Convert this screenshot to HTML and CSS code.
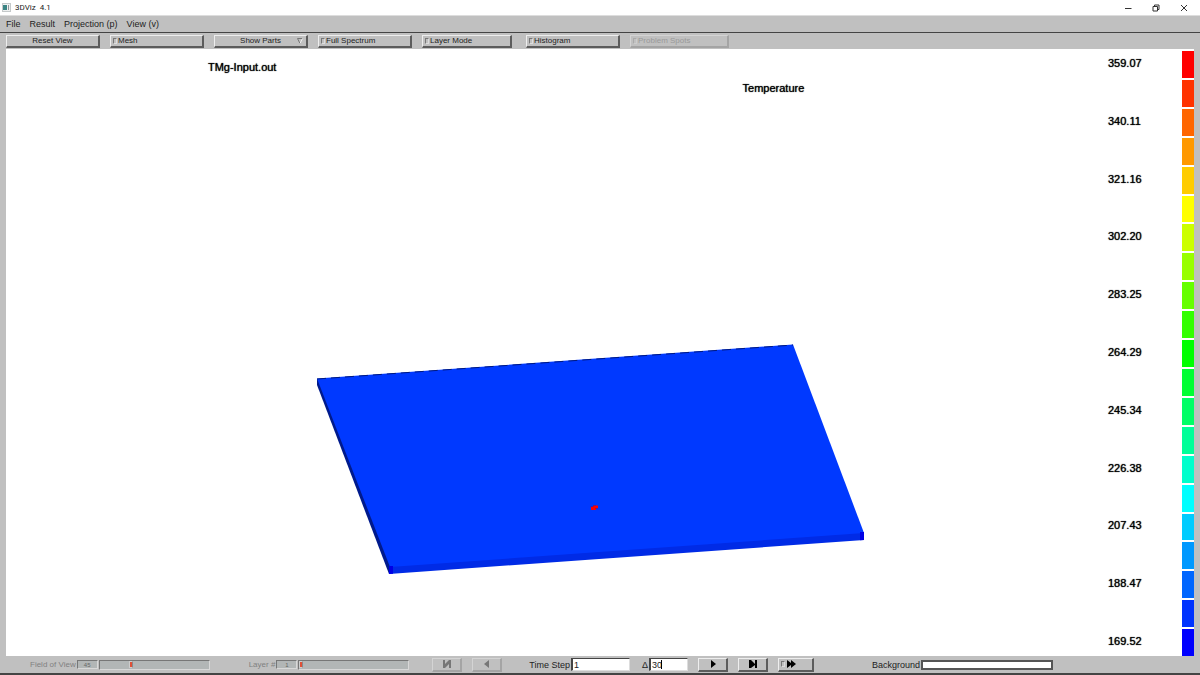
FILE: index.html
```html
<!DOCTYPE html>
<html lang="en">
<head>
<meta charset="utf-8">
<title>3DViz 4.1</title>
<link rel="stylesheet" href="styles.css">
</head>
<body>
<header class="titlebar">
  <svg class="app-icon" viewBox="0 0 9 9" aria-hidden="true"><rect x=".5" y=".5" width="8" height="8" fill="#eef0f0" stroke="#c5c9ca"/><rect x="1" y="2" width="4" height="5" fill="#3b8484"/><path d="M6.500 2v5" stroke="#8f9698"/></svg>
  <span class="app-name">3DViz&nbsp; 4.1</span>
  <div class="window-controls">
    <button aria-label="Minimize"><svg viewBox="0 0 8 8"><path d="M1 4.500h6.500"/></svg></button>
    <button aria-label="Restore"><svg viewBox="0 0 8 8"><path d="M1 2.500h4.500v4.500h-4.500zM2.500 2.500v-1.500h4.500v4.500h-1.500"/></svg></button>
    <button aria-label="Close"><svg viewBox="0 0 8 8"><path d="M1 1l6 6M7 1l-6 6"/></svg></button>
  </div>
</header>
<nav class="menubar">
  <button>File</button>
  <button>Result</button>
  <button>Projection (p)</button>
  <button>View (v)</button>
</nav>
<div class="toolbar">
  <button class="raised">Reset View</button>
  <label class="raised toggle"><input type="checkbox">Mesh</label>
  <button class="raised menu-button" aria-haspopup="true">Show Parts<svg viewBox="0 0 6 6" aria-hidden="true"><path d="M3 5.500L.5 .5h5" fill="none" stroke="#777"/><path d="M5.500 .5L3 5.500" stroke="#eee"/></svg></button>
  <label class="raised toggle"><input type="checkbox">Full Spectrum</label>
  <label class="raised toggle narrow"><input type="checkbox">Layer Mode</label>
  <label class="raised toggle"><input type="checkbox">Histogram</label>
  <label class="raised toggle off"><input type="checkbox" disabled>Problem Spots</label>
</div>
<main class="viewport">
  <svg class="model" viewBox="6 49 1188 607" role="img" aria-label="Temperature on plate">
    <path d="M317 379L317 385L389 574L393 568L320 379z" fill="#001a8c"/>
    <path d="M389 566L389 574L864 540L864 532z" fill="#002be6"/>
    <path d="M317 378.500L793 344.500L864 533L390 567z" fill="#0039ff"/>
    <path d="M317 379L793 345" stroke="#001a80" stroke-dasharray="9 5"/>
    <path d="M389 566h4v7.700l-4 .3zM860 532h4v8l-4 .3z" fill="#0000e6"/>
    <path d="M593 505.500h5v2.500h-2v2h-5v-3h2z" fill="#f00"/>
    <path d="M590.500 506.500h3M593 505.500h3M595 508.500h3" stroke="#70106a" stroke-width=".6"/>
  </svg>
  <h1 class="file-name">TMg-Input.out</h1>
  <h2 class="quantity">Temperature</h2>
  <ol class="scale">
    <li><span>359.07</span><i class="c1"></i></li>
    <li><i class="c2"></i></li>
    <li><span>340.11</span><i class="c3"></i></li>
    <li><i class="c4"></i></li>
    <li><span>321.16</span><i class="c5"></i></li>
    <li><i class="c6"></i></li>
    <li><span>302.20</span><i class="c7"></i></li>
    <li><i class="c8"></i></li>
    <li><span>283.25</span><i class="c9"></i></li>
    <li><i class="c10"></i></li>
    <li><span>264.29</span><i class="c11"></i></li>
    <li><i class="c12"></i></li>
    <li><span>245.34</span><i class="c13"></i></li>
    <li><i class="c14"></i></li>
    <li><span>226.38</span><i class="c15"></i></li>
    <li><i class="c16"></i></li>
    <li><span>207.43</span><i class="c17"></i></li>
    <li><i class="c18"></i></li>
    <li><span>188.47</span><i class="c19"></i></li>
    <li><i class="c20"></i></li>
    <li><span>169.52</span><i class="c21"></i></li>
  </ol>
</main>
<footer class="controls">
  <div class="slider-group">
    <label for="fov">Field of View</label>
    <output for="fov">45</output>
    <input id="fov" type="range" min="0" max="180" value="50" disabled>
  </div>
  <div class="slider-group">
    <label for="layer">Layer #</label>
    <output for="layer">1</output>
    <input id="layer" type="range" min="1" max="100" value="1" disabled>
  </div>
  <div class="button-group">
    <button class="raised off" disabled aria-label="First step"><svg viewBox="0 0 10 10"><path d="M1 1h2v4l4-4h2v8h-2v-4l-4 4h-2z"/></svg></button>
    <button class="raised off" disabled aria-label="Previous step"><svg viewBox="0 0 10 10"><path d="M7 1v8L2 5z"/></svg></button>
  </div>
  <div class="field step"><label for="step">Time Step</label><input id="step" type="text" value="1"></div>
  <div class="field delta"><label for="delta">Δ</label><input id="delta" type="text" value="30"></div>
  <div class="button-group">
    <button class="raised" aria-label="Next step"><svg viewBox="0 0 10 10"><path d="M3 1v8l5-4z"/></svg></button>
    <button class="raised" aria-label="Last step"><svg viewBox="0 0 10 10"><path d="M1 1h2l4 4v-4h2v8h-2v-3L3 9h-2z"/></svg></button>
    <label class="raised toggle play"><input type="checkbox" aria-label="Play"><svg viewBox="0 0 10 10" aria-hidden="true"><path d="M1 1l4 3v-3l5 4-5 4v-3l-4 3z"/></svg></label>
  </div>
  <div class="field background"><label for="bg">Background</label><button id="bg" class="swatch" aria-label="Background"></button></div>
</footer>
</body>
</html>
```
FILE: styles.css
```css
* { box-sizing: border-box; }
body {
  margin: 0;
  min-height: 100vh;
  display: flex;
  flex-direction: column;
  background: #c0c0c0;
  color: #222;
  font: 9px/12px "Liberation Sans", Arial, sans-serif;
}
button, input { font: inherit; color: inherit; margin: 0; }
button { padding: 0; border: 0; background: none; }

.titlebar {
  display: flex;
  align-items: center;
  height: 15px;
  padding-left: 2px;
  background: #fff;
}
.app-icon { width: 9px; height: 9px; }
.app-name { margin-left: 4px; font: 8px/12px Roboto, sans-serif; }
.window-controls { display: flex; margin-left: auto; padding-right: 2px; }
.window-controls button { width: 28px; height: 14px; display: grid; place-items: center; }
.window-controls svg { width: 8px; height: 8px; fill: none; stroke: #333; stroke-width: 1; }

.menubar {
  display: flex;
  gap: 9px;
  height: 18px;
  padding: 0 6px;
  border-top: 1px solid #ddd;
  border-bottom: 1px solid #444;
}

.toolbar {
  display: grid;
  grid-template-columns: repeat(6, 94px) 99px;
  gap: 10px;
  padding: 2px 6px 1px;
}
.raised {
  display: flex;
  align-items: center;
  justify-content: center;
  height: 13px;
  border: 1px solid;
  border-width: 1px 2px 2px 1px;
  border-color: #eee #5c5c5c #5c5c5c #eee;
  font-size: 8px;
  line-height: 10px;
}
.toggle { justify-content: flex-start; padding-left: 2px; gap: 1px; }
.toggle input {
  appearance: none;
  width: 4px;
  height: 6px;
  border: 1px solid;
  border-color: #777 #ddd #ddd #777;
}
.narrow { width: 90px; }
.off { color: #999; border-color: #d4d4d4 #a4a4a4 #a4a4a4 #d4d4d4; }
.off input { border-color: #aaa #ccc #ccc #aaa; }
.menu-button { position: relative; }
.menu-button svg { position: absolute; right: 3px; width: 6px; height: 6px; }

.viewport {
  position: relative;
  flex: 1;
  display: flex;
  justify-content: flex-end;
  margin: 0 6px;
  background: #fff;
}
.model { position: absolute; inset: 0; width: 100%; height: 100%; }
.file-name, .quantity, .scale {
  margin: 0;
  font-size: 11px;
  font-weight: 400;
  line-height: 14px;
  color: #000;
  text-shadow: 0 0 1px #000;
}
.file-name { position: absolute; top: 11px; left: 17%; }
.quantity { position: absolute; top: 32px; left: 62%; }
.scale {
  position: relative;
  display: flex;
  flex-direction: column;
  gap: 2px;
  width: 86px;
  padding: 2px 0 0;
  list-style: none;
}
.scale li { flex: 1; display: flex; justify-content: space-between; align-items: center; }
.scale span { padding-bottom: 3px; }
.scale i { width: 12px; height: 100%; margin-left: auto; }
.c1 { background: #ff0000; }
.c2 { background: #ff3300; }
.c3 { background: #ff6600; }
.c4 { background: #ff9900; }
.c5 { background: #ffcc00; }
.c6 { background: #ffff00; }
.c7 { background: #ccff00; }
.c8 { background: #99ff00; }
.c9 { background: #66ff00; }
.c10 { background: #33ff00; }
.c11 { background: #00ff00; }
.c12 { background: #00ff33; }
.c13 { background: #00ff66; }
.c14 { background: #00ff99; }
.c15 { background: #00ffcc; }
.c16 { background: #00ffff; }
.c17 { background: #00ccff; }
.c18 { background: #0099ff; }
.c19 { background: #0066ff; }
.c20 { background: #0033ff; }
.c21 { background: #0000ff; }

.controls {
  display: flex;
  align-items: center;
  height: 19px;
  padding-left: 30px;
  border-bottom: 2px solid #444;
}
.slider-group {
  display: flex;
  align-items: center;
  margin-right: 39px;
  color: #808080;
  font-size: 8px;
}
.slider-group output {
  width: 21px;
  height: 9px;
  margin: 0 1px;
  border: 1px solid;
  border-color: #777 #d8d8d8 #d8d8d8 #777;
  background: #b2b6b6;
  color: #666;
  font-size: 6px;
  line-height: 8px;
  text-align: center;
}
.slider-group input {
  appearance: none;
  width: 111px;
  height: 10px;
  border: 1px solid;
  border-color: #777 #d8d8d8 #d8d8d8 #777;
  background: #b2b6b6;
}
.slider-group input::-webkit-slider-thumb {
  appearance: none;
  width: 4px;
  height: 7px;
  border: 1px solid #ccc;
  border-right-color: #888;
  background: #e05038;
}
.button-group { display: flex; gap: 10px; }
.slider-group + .button-group { margin-left: -16px; }
.button-group .raised { width: 30px; height: 14px; }
.button-group svg { width: 10px; height: 10px; fill: #000; }
.button-group .off svg { fill: #777; }
.button-group .play { width: 36px; }
.field { display: flex; align-items: center; gap: 1px; }
.field input {
  height: 13px;
  padding: 0 1px;
  border: 1px solid;
  border-color: #444 #ddd #ddd #444;
  border-left-width: 2px;
  border-radius: 0;
  outline: 0;
  background: #fff;
}
.step { margin-left: 27px; }
.step input { width: 59px; }
.delta { position: relative; margin: 0 10px 0 12px; }
.delta input { width: 39px; }
/* text caret after the value */
.delta::after {
  content: "";
  position: absolute;
  top: 2px;
  right: 26px;
  width: 1px;
  height: 9px;
  background: #000;
}
.background { margin-left: 58px; }
.swatch { width: 132px; height: 10px; border: 2px solid #555; background: #fff; }
```
